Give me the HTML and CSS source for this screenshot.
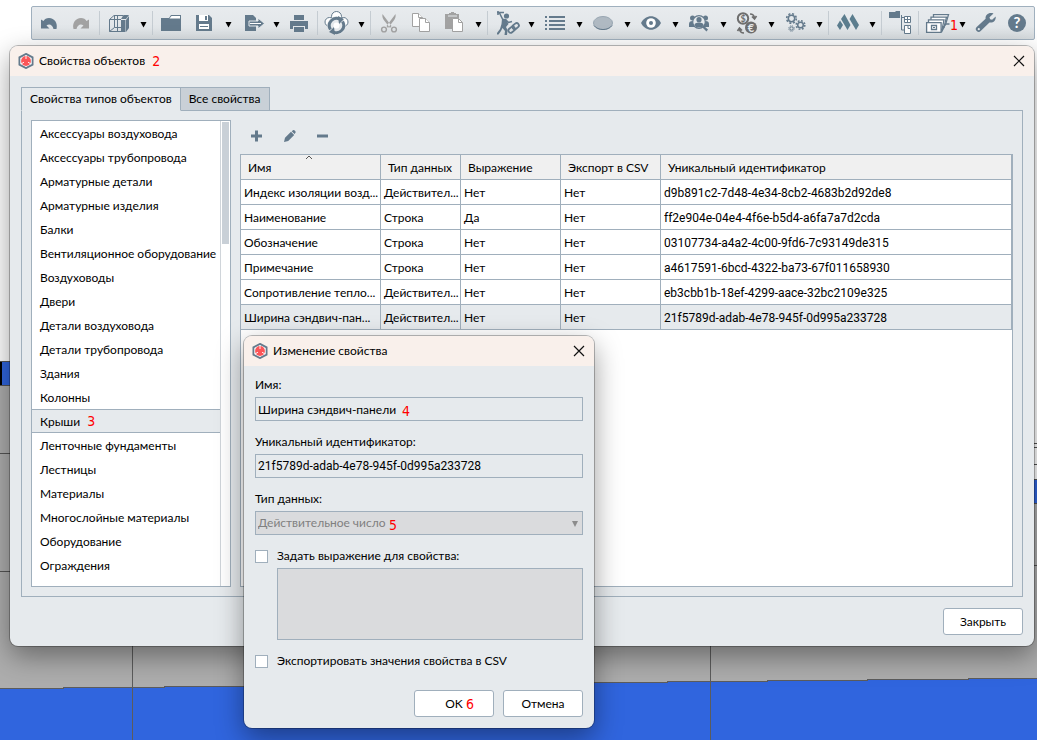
FILE: index.html
```html
<!DOCTYPE html>
<html lang="ru">
<head>
  <meta charset="UTF-8">
  <meta name="viewport" content="width=device-width, initial-scale=1.0">
  <title>Свойства объектов</title>
  <link rel="stylesheet" href="styles.css">
</head>
<body>
  <!-- Общие значки -->
  <svg class="sprite" aria-hidden="true">
    <symbol id="caret" viewBox="0 0 16 32"><path d="M6.500 15h6l-3 5.500z"/></symbol>
    <symbol id="close" viewBox="0 0 12 12"><path d="M1 1l10 10M11 1L1 11" fill="none" stroke="#111" stroke-width="1.200"/></symbol>
    <symbol id="logo" viewBox="0 0 16 16">
      <path d="M8 .9l6.600 3.500v7.200L8 15.100l-6.600-3.500V4.400z" fill="#fff" stroke="#647a8c" stroke-width="1.800"/>
      <circle cx="8" cy="8" r="4.900" fill="#fb5558"/>
      <path d="M8 3v3M6 9.200l-2.500 1.500M10 9.200l2.500 1.500" fill="none" stroke="#fff" stroke-width=".9"/>
    </symbol>
  </svg>

  <!-- 3D-вид -->
  <svg class="scene" viewBox="0 0 1037 740" preserveAspectRatio="none" shape-rendering="crispEdges" aria-hidden="true">
    <rect width="1037" height="740" fill="#fff"/>
    <rect y="361" width="500" height="379" fill="#adadad"/>
    <rect x="500" y="479" width="537" height="261" fill="#adadad"/>
    <rect y="361" width="20" height="24" fill="#3065de"/>
    <rect y="361" width="2" height="24" fill="#000"/>
    <rect x="1020" y="479" width="17" height="24" fill="#3065de"/>
    <path d="M0 361.500h20M0 385.500h20M0 453.500h20M0 571.500h20M1020 443.500h17M1020 447.500h17M1020 464.500h17M1020 479.500h17M1020 503.500h17M1020 565.500h17" stroke="#555"/>
    <path d="M0 688h63v-1h101v-1h100v-1h101v-1h101v-1h100v-1h101v-1h200v-1h100v-1h101v-1h69v62H0z" fill="#3065de"/>
    <path d="M0 688.500h63v-1h101v-1h100v-1h101v-1h101v-1h100v-1h101v-1h100v-1h100v-1h101v-1h69M132.500 600v140M710.500 600v140" fill="none" stroke="#5c5c5c"/>
  </svg>

  <!-- Панель инструментов -->
  <header class="toolbar">
    <button class="tool" aria-label="Отменить"><svg viewBox="0 0 32 32"><path d="M8 12.500v9h8.500l-3-3c3-2 6-.5 7 3.500h3c1.500-6-2-10.800-7.500-11-2.500 0-4.500 1-5.500 3z"/></svg></button>
    <button class="tool off" aria-label="Повторить"><svg viewBox="0 0 32 32"><path d="M24 12.500v9h-8.500l3-3c-3-2-6-.5-7 3.500h-3c-1.500-6 2-10.800 7.500-11 2.500 0 4.500 1 5.500 3z"/></svg></button>
    <span class="sep"></span>
    <button class="tool" aria-label="Вид"><svg viewBox="0 0 32 32"><path d="M19 13h4.500v12H19zM19 12l2.500-4H27l-3 4zM24 13l3-4v12l-3 4z"/><path d="M19 12.500H7.500v12H19M7.500 12.500l4.500-4h9M12.500 8.500v12H19M12.500 20.500l-5 4M15.500 8.500v16" fill="none" stroke="#647a8c"/></svg></button>
    <button class="drop" aria-label="Ещё виды"><svg><use href="#caret"/></svg></button>
    <span class="sep"></span>
    <button class="tool" aria-label="Открыть"><svg viewBox="0 0 32 32"><path d="M6 11h8l2-3h10v16H6z"/><path d="M14.500 11.500l2-2.500H25v2.500z" fill="#fff"/><path d="M6 12h20v1H6z"/></svg></button>
    <button class="tool" aria-label="Сохранить"><svg viewBox="0 0 32 32"><path d="M9 8h13l3 3v13H9z"/><path d="M12 8h9v6h-9zM12 17h10v5H12z" fill="#fff"/><path d="M18 9h2v4h-2zM13 19h8v1h-8z"/></svg></button>
    <button class="drop" aria-label="Варианты сохранения"><svg><use href="#caret"/></svg></button>
    <button class="tool" aria-label="Экспорт"><svg viewBox="0 0 32 32"><path d="M10 8h8l3 3v13H10z"/><path d="M14 14h9v-3l6.500 5.500L23 22v-3h-9z" stroke="#e6eaed"/><path d="M15 16.500h11" stroke="#fff"/></svg></button>
    <button class="drop" aria-label="Варианты экспорта"><svg><use href="#caret"/></svg></button>
    <button class="tool" aria-label="Печать"><svg viewBox="0 0 32 32"><path d="M11 8h10v5H11zM7 14h18v8h-3v-3H10v3H7zM11 20h10v5H11z"/></svg></button>
    <span class="sep"></span>
    <button class="tool" aria-label="Обновить"><svg viewBox="0 0 32 32"><g fill="#fff" stroke="#647a8c"><circle cx="9.500" cy="15" r="4.500"/><circle cx="23.500" cy="15" r="4.500"/><circle cx="16.500" cy="9.500" r="5"/></g><circle cx="16.500" cy="18.500" r="9.200" fill="#e6eaed"/><g fill="none" stroke="#647a8c" stroke-width="3"><path d="M10.500 22.500a7.200 7.200 0 0 1 9-10.500"/><path d="M22.500 14.500a7.200 7.200 0 0 1-9 10.500"/></g><path d="M18 9l6 3-5 5zM15 28l-6-3 5-5z"/><circle cx="16.500" cy="18.500" r="3" fill="#fff"/></svg></button>
    <button class="drop" aria-label="Варианты обновления"><svg><use href="#caret"/></svg></button>
    <span class="sep"></span>
    <button class="tool off" aria-label="Вырезать"><svg viewBox="0 0 32 32"><path d="M9.500 7c-.6 3 .5 5 1.700 6.500l5.800 7.500 1.500-2zM22.500 7c.6 3-.5 5-1.700 6.500L15 21l-1.500-2z"/><g fill="none" stroke="#a2a2a2" stroke-width="1.400"><circle cx="11" cy="22.500" r="2.400"/><circle cx="21" cy="22.500" r="2.400"/></g></svg></button>
    <button class="tool off" aria-label="Копировать"><svg viewBox="0 0 32 32"><g fill="#fff" stroke="#a2a2a2"><path d="M7.500 6.500h6l4 4v9h-10z"/><path d="M13.500 6.500v4h4M14.500 11.500h6l4 4v9h-10z"/><path d="M20.500 11.500v4h4"/></g></svg></button>
    <button class="tool off" aria-label="Вставить"><svg viewBox="0 0 32 32"><path d="M8 7h4V6h2V5h3v1h2v1h3v15H8z"/><path d="M11 9h9" stroke="#e6eaed"/><path d="M15.500 11.500h6l4 4v9h-10z" fill="#fff" stroke="#a2a2a2"/><path d="M21.500 11.500v4h4" fill="none" stroke="#a2a2a2"/></svg></button>
    <button class="drop" aria-label="Варианты вставки"><svg><use href="#caret"/></svg></button>
    <span class="sep"></span>
    <button class="tool" aria-label="Построение"><svg viewBox="0 0 32 32"><circle cx="16.500" cy="9" r="2.600"/><path d="M12 11.500l4 .5 2.500 5-2.500 3 1.500 3-.5 5h-2.500l.5-4-2.500-3-1.500 3-2.500 3.500H7v-1.500L10 22l1.500-5z"/><g fill="none" stroke="#647a8c"><path d="M8 4v4M7 5.500h7M9.500 6l3 6" stroke-width="1.600"/><path d="M15.500 12.500l3 3 3.500-1" stroke-width="1.500"/><rect x="18" y="20.500" width="7" height="4.500" rx="2.200" stroke-width="1.800" transform="rotate(-40 21.500 22.500)"/><rect x="22" y="17" width="7" height="4.500" rx="2.200" stroke-width="1.800" transform="rotate(-40 25.500 19)"/></g></svg></button>
    <button class="drop" aria-label="Варианты построения"><svg><use href="#caret"/></svg></button>
    <button class="tool" aria-label="Список"><svg viewBox="0 0 32 32"><path d="M7 9h2v2H7zM11 9h16v2H11zM7 13h2v2H7zM11 13h16v2H11zM7 17h2v2H7zM11 17h16v2H11zM7 21h2v2H7zM11 21h16v2H11z"/></svg></button>
    <button class="drop" aria-label="Варианты списка"><svg><use href="#caret"/></svg></button>
    <button class="tool" aria-label="Фильтр"><svg viewBox="0 0 32 32"><ellipse cx="17" cy="16" rx="9.500" ry="6.500" fill="#afb9c2" stroke="#98a6b2"/><path d="M8 18.500c3.500 5.400 14.500 5.400 18 0" fill="none" stroke="#647a8c"/></svg></button>
    <button class="drop" aria-label="Варианты фильтра"><svg><use href="#caret"/></svg></button>
    <button class="tool" aria-label="Видимость"><svg viewBox="0 0 32 32"><path d="M7 16c4.500-9 15.500-9 20 0-4.500 9-15.500 9-20 0z"/><circle cx="17" cy="16" r="4.800" fill="#fff"/><circle cx="17" cy="16" r="2"/></svg></button>
    <button class="drop" aria-label="Варианты видимости"><svg><use href="#caret"/></svg></button>
    <button class="tool" aria-label="Совместная работа"><svg viewBox="0 0 32 32"><circle cx="10.500" cy="11" r="2.500"/><circle cx="23.500" cy="11" r="2.500"/><path d="M7 20v-3q0-3 3.500-3h13q3.500 0 3.500 3v3z"/><circle cx="17" cy="15" r="6.300" fill="#e6eaed" stroke="#647a8c" stroke-width="1.200"/><circle cx="17" cy="12.700" r="2.600"/><path d="M12.500 18q0-2.500 4.500-2.500t4.500 2.500l-2 2.500h-5zM20 20l1.500-1.500 4.500 4-1.500 2z"/></svg></button>
    <button class="drop" aria-label="Варианты совместной работы"><svg><use href="#caret"/></svg></button>
    <button class="tool grey" aria-label="Стоимость"><svg viewBox="0 0 32 32"><circle cx="13" cy="11.500" r="5.200" fill="#e6eaed" stroke="#6e6e6e" stroke-width="2"/><circle cx="21" cy="20.500" r="6"/><text x="13" y="15" class="coin">$</text><text x="21" y="24.500" class="coin light">€</text><g fill="none" stroke="#6e6e6e" stroke-width="1.700"><path d="M20 7q4 0 4.500 4M22 9.500l2.500 2.500 2-3M14 26q-4 0-4.500-4M12 23.500L9.500 21l-2 3"/></g></svg></button>
    <button class="drop" aria-label="Варианты стоимости"><svg><use href="#caret"/></svg></button>
    <button class="tool" aria-label="Настройки стилей"><svg viewBox="0 0 32 32"><g fill="none" stroke="#647a8c"><circle cx="13.500" cy="11.500" r="3.200" stroke-width="1.500"/><circle cx="13.500" cy="11.500" r="4.800" stroke-width="1.600" stroke-dasharray="2 1.770"/><circle cx="22.500" cy="18" r="2.800" stroke-width="1.500"/><circle cx="22.500" cy="18" r="4.300" stroke-width="1.600" stroke-dasharray="1.800 1.577"/><circle cx="13.500" cy="21.500" r="1.600"/><circle cx="13.500" cy="21.500" r="2.700" stroke-dasharray="1.200 .92"/></g></svg></button>
    <button class="drop" aria-label="Варианты настроек стилей"><svg><use href="#caret"/></svg></button>
    <span class="sep"></span>
    <button class="tool teal" aria-label="Материалы"><svg viewBox="0 0 32 32"><path d="M6 18.500l3-5 3 4.500-3 5zM10 12l3.500-5 6 11-3 5zM18.500 12l3-5L28 18l-3 5z"/></svg></button>
    <button class="drop" aria-label="Варианты материалов"><svg><use href="#caret"/></svg></button>
    <span class="sep"></span>
    <button class="tool" aria-label="Структура"><svg viewBox="0 0 32 32"><path d="M5 5h6l1-1h4v7H5z"/><g fill="#fff" stroke="#647a8c"><path d="M17 10.500h3M17.500 8v15h3" fill="none"/><path d="M20.500 9.500h6v6h-6zM20.500 18.500h6v8h-6z"/><path d="M23.500 9.500v6M20.500 12.500h6M24 18.500v3h2.500"/></g></svg></button>
    <span class="sep"></span>
    <button class="tool" aria-label="Свойства объектов"><svg viewBox="0 0 32 32"><g fill="#fff" stroke="#647a8c" stroke-width="1.300"><path d="M12.500 14V7.700h15l-3 10z"/><path d="M10 14v-3.800h15.500l-2.500 10z"/><path d="M7.500 16v-3.200h15.500l-2 10z"/><path d="M5.600 15.600h14.500v9.800H5.600z"/><path d="M20.500 25l4-8h4" stroke-width="1.500" fill="none"/><path d="M10.500 18.500h5v4h-5z"/></g><path d="M12 20h2v1h-2z"/></svg></button>
    <button class="drop" aria-label="Ещё свойства"><svg><use href="#caret"/></svg><span class="mark">1</span></button>
    <button class="tool" aria-label="Настройки"><svg viewBox="0 0 32 32"><path d="M24.500 6.500l-4 3.800.6 2 2 .5 3.600-3.400c.4 4-2.300 6.600-6.200 6.100l-8.800 8.600a2.800 2.800 0 0 1-4-4l8.900-8.300c-.6-4 3.500-7 7.900-5.300z"/><circle cx="9.800" cy="22.200" r="1.100" fill="#e6eaed"/></svg></button>
    <button class="tool" aria-label="Справка"><svg viewBox="0 0 32 32"><circle cx="16" cy="16" r="9"/><text x="16" y="21" class="help">?</text></svg></button>
  </header>

  <!-- Окно свойств объектов -->
  <section class="window main-window">
    <div class="titlebar">
      <svg class="logo"><use href="#logo"/></svg>
      <h1>Свойства объектов</h1>
      <span class="num">2</span>
      <button class="close" aria-label="Закрыть окно"><svg><use href="#close"/></svg></button>
    </div>
    <div class="content">
      <div class="tabs" role="tablist">
        <button class="tab active" role="tab" aria-selected="true">Свойства типов объектов</button>
        <button class="tab" role="tab" aria-selected="false">Все свойства</button>
      </div>
      <div class="panel">
        <div class="types">
          <ul>
            <li>Аксессуары воздуховода</li>
            <li>Аксессуары трубопровода</li>
            <li>Арматурные детали</li>
            <li>Арматурные изделия</li>
            <li>Балки</li>
            <li>Вентиляционное оборудование</li>
            <li>Воздуховоды</li>
            <li>Двери</li>
            <li>Детали воздуховода</li>
            <li>Детали трубопровода</li>
            <li>Здания</li>
            <li>Колонны</li>
            <li class="selected">Крыши <span class="num">3</span></li>
            <li>Ленточные фундаменты</li>
            <li>Лестницы</li>
            <li>Материалы</li>
            <li>Многослойные материалы</li>
            <li>Оборудование</li>
            <li>Ограждения</li>
            <li>Окна</li>
          </ul>
          <div class="scrollbar"><div class="thumb"></div></div>
        </div>
        <div class="properties">
          <div class="actions">
            <button aria-label="Добавить"><svg viewBox="0 0 32 32"><path d="M11 14.500h4v-4h3v4h4v3h-4v4h-3v-4h-4z"/></svg></button>
            <button aria-label="Изменить"><svg viewBox="0 0 32 32"><path d="M11 22l1-4.200 6-6 3.200 3.200-6 6zM18.700 11.200l1.300-1q1-.5 2 .5t.5 2l-1 1.300z"/></svg></button>
            <button aria-label="Удалить"><svg viewBox="0 0 32 32"><path d="M11 14.500h11v3H11z"/></svg></button>
          </div>
          <div class="table-box">
            <table>
              <thead>
                <tr>
                  <th class="col-name">Имя<svg class="sort" viewBox="0 0 8 5"><path d="M1 4l3-3 3 3" fill="none" stroke="#555"/></svg></th>
                  <th class="col-type">Тип данных</th>
                  <th class="col-flag">Выражение</th>
                  <th class="col-flag">Экспорт в CSV</th>
                  <th>Уникальный идентификатор</th>
                </tr>
              </thead>
              <tbody>
                <tr><td>Индекс изоляции возд...</td><td>Действител...</td><td>Нет</td><td>Нет</td><td class="uid">d9b891c2-7d48-4e34-8cb2-4683b2d92de8</td></tr>
                <tr><td>Наименование</td><td>Строка</td><td>Да</td><td>Нет</td><td class="uid">ff2e904e-04e4-4f6e-b5d4-a6fa7a7d2cda</td></tr>
                <tr><td>Обозначение</td><td>Строка</td><td>Нет</td><td>Нет</td><td class="uid">03107734-a4a2-4c00-9fd6-7c93149de315</td></tr>
                <tr><td>Примечание</td><td>Строка</td><td>Нет</td><td>Нет</td><td class="uid">a4617591-6bcd-4322-ba73-67f011658930</td></tr>
                <tr><td>Сопротивление тепло...</td><td>Действител...</td><td>Нет</td><td>Нет</td><td class="uid">eb3cbb1b-18ef-4299-aace-32bc2109e325</td></tr>
                <tr class="selected"><td>Ширина сэндвич-пан...</td><td>Действител...</td><td>Нет</td><td>Нет</td><td class="uid">21f5789d-adab-4e78-945f-0d995a233728</td></tr>
              </tbody>
            </table>
          </div>
        </div>
      </div>
      <div class="buttons">
        <button class="button">Закрыть</button>
      </div>
    </div>
  </section>

  <!-- Окно изменения свойства -->
  <section class="window edit-window">
    <div class="titlebar">
      <svg class="logo"><use href="#logo"/></svg>
      <h2>Изменение свойства</h2>
      <button class="close" aria-label="Закрыть окно"><svg><use href="#close"/></svg></button>
    </div>
    <form class="form">
      <label for="name">Имя:</label>
      <div class="field">
        <input type="text" id="name" value="Ширина сэндвич-панели" readonly>
        <span class="mark mark-name">4</span>
      </div>
      <label for="uid">Уникальный идентификатор:</label>
      <div class="field">
        <input type="text" id="uid" class="uid" value="21f5789d-adab-4e78-945f-0d995a233728" readonly>
      </div>
      <label for="type">Тип данных:</label>
      <div class="field">
        <select id="type" disabled><option>Действительное число</option></select>
        <svg class="arrow" viewBox="0 0 6 6"><path d="M0 0h6L3 6z"/></svg>
        <span class="mark mark-type">5</span>
      </div>
      <label class="check"><input type="checkbox" id="useExpr">Задать выражение для свойства:</label>
      <textarea aria-label="Выражение" disabled></textarea>
      <label class="check"><input type="checkbox" id="csv">Экспортировать значения свойства в CSV</label>
      <div class="buttons">
        <button type="button" class="button">OK<span class="mark mark-ok">6</span></button>
        <button type="button" class="button">Отмена</button>
      </div>
    </form>
  </section>
</body>
</html>
```
FILE: styles.css
```css
* {
  margin: 0;
  padding: 0;
  box-sizing: border-box;
}
html, body {
  height: 100%;
}
body {
  position: relative;
  overflow: hidden;
  font-family: Lato, Roboto, sans-serif;
  font-size: 12px;
  line-height: 18px;
  color: #000;
}
button, input, select, textarea {
  font: inherit;
  color: inherit;
}
button {
  background: none;
  border: none;
}
.uid {
  font-family: Roboto, sans-serif;
}
.sprite {
  position: absolute;
  width: 0;
  height: 0;
}
.scene {
  position: absolute;
  inset: 0;
  width: 100%;
  height: 100%;
}

/* Панель инструментов */
.toolbar {
  position: relative;
  display: flex;
  height: 34px;
  margin: 6px 2px 0 31px;
  padding: 0 1px;
  border: 1px solid #a0b0be;
  border-radius: 2px;
  background: linear-gradient(#e8ebee, #e3e7ea 60%, #d5dadd);
}
.tool, .drop {
  position: relative;
  flex: none;
  width: 32px;
  height: 32px;
}
.drop {
  width: 16px;
}
.tool svg, .drop svg {
  display: block;
  width: 100%;
  height: 32px;
}
.tool svg {
  fill: #647a8c;
}
.tool.off svg {
  fill: #a2a2a2;
}
.tool.grey svg {
  fill: #6e6e6e;
}
.tool.teal svg {
  fill: #5b7d8e;
}
.sep {
  flex: none;
  width: 1px;
  height: 24px;
  margin: 4px 2px;
  background: #c5ccd2;
}
.coin {
  font-size: 9px;
  font-weight: bold;
  text-anchor: middle;
}
.coin.light {
  font-size: 11px;
  fill: #e6eaed;
}
.help {
  font-size: 15px;
  font-weight: bold;
  text-anchor: middle;
  fill: #fff;
}

/* Красные номера */
.num, .mark {
  color: #f00;
  font-family: "DejaVu Sans Condensed", "DejaVu Sans", sans-serif;
  font-size: 14px;
}
.mark {
  position: absolute;
}
.drop .mark {
  top: 9px;
  left: -3px;
}
.mark-name {
  top: 5px;
  left: 147px;
}
.mark-type {
  top: 5px;
  left: 134px;
}
.mark-ok {
  top: 4px;
  left: 51px;
}

/* Окна */
.window {
  position: absolute;
  display: flex;
  flex-direction: column;
  background: #e6eaed;
  border-radius: 8px;
  box-shadow: 0 0 0 1px rgba(0, 0, 0, 0.26), 0 10px 28px rgba(0, 0, 0, 0.4);
}
.main-window {
  top: 46px;
  right: 3px;
  bottom: 94px;
  left: 10px;
}
.edit-window {
  top: 336px;
  left: 244px;
  width: 350px;
}
.titlebar {
  display: flex;
  align-items: center;
  height: 30px;
  padding: 0 9px 0 8px;
  background: #f9f0eb;
  border-radius: 8px 8px 0 0;
}
.titlebar h1, .titlebar h2 {
  margin-left: 5px;
  font-size: 12px;
  font-weight: normal;
}
.titlebar .num {
  margin-left: 7px;
}
.logo {
  width: 16px;
  height: 16px;
}
.close {
  width: 12px;
  height: 12px;
  margin-left: auto;
}
.close svg {
  display: block;
  width: 12px;
  height: 12px;
}
.content {
  flex: 1;
  display: flex;
  flex-direction: column;
  min-height: 0;
  padding: 11px;
}

/* Вкладки */
.tabs {
  display: flex;
  margin-bottom: -1px;
}
.tab {
  height: 24px;
  padding: 0 8px;
  border: 1px solid #a0afbc;
  border-left: none;
  background: #c9d0d7;
}
.tab.active {
  position: relative;
  border-left: 1px solid #a0afbc;
  border-bottom-color: #e6eaed;
  background: #e6eaed;
}
.panel {
  flex: 1;
  display: flex;
  gap: 9px;
  min-height: 0;
  padding: 9px;
  border: 1px solid #a0afbc;
}

/* Список типов */
.types {
  display: flex;
  flex: none;
  width: 200px;
  border: 1px solid #a0afbc;
  background: #fff;
}
.types ul {
  flex: 1;
  min-width: 0;
  overflow: hidden;
  list-style: none;
  white-space: nowrap;
}
.types li {
  height: 24px;
  padding: 1px 8px 0;
  border: solid transparent;
  border-width: 1px 0;
  line-height: 22px;
}
.types li.selected {
  border-color: #a0afbc;
  background: #e6eaed;
  line-height: 20px;
}
.types .num {
  margin-left: 4px;
}
.scrollbar {
  width: 10px;
  padding: 1px;
  border-left: 1px solid #d0d5da;
}
.thumb {
  height: 122px;
  background: #c9d0d7;
}

/* Таблица свойств */
.properties {
  flex: 1;
  display: flex;
  flex-direction: column;
  min-width: 0;
}
.actions {
  display: flex;
  gap: 1px;
  height: 34px;
}
.actions button {
  width: 32px;
  height: 32px;
}
.actions svg {
  display: block;
  fill: #647a8c;
}
.table-box {
  flex: 1;
  min-height: 0;
  border: 1px solid #a0afbc;
  background: #fff;
}
table {
  width: 100%;
  table-layout: fixed;
  border-spacing: 0;
}
th, td {
  height: 25px;
  border: solid #a0afbc;
  border-width: 0 1px 1px 0;
  overflow: hidden;
  text-align: left;
  white-space: nowrap;
}
th {
  position: relative;
  padding: 2px 7px 0;
  background: #f0f0f0;
  font-weight: normal;
}
td {
  padding: 2px 3px 0;
}
tr.selected td {
  background: #e6eaed;
}
.col-name {
  width: 140px;
}
.col-type {
  width: 80px;
}
.col-flag {
  width: 100px;
}
.sort {
  position: absolute;
  top: 0;
  left: 64px;
  width: 8px;
  height: 5px;
}

/* Кнопки */
.buttons {
  display: flex;
  justify-content: flex-end;
  gap: 9px;
  margin-top: 11px;
}
.button {
  position: relative;
  width: 80px;
  height: 27px;
  border: 1px solid #a0afbc;
  border-radius: 3px;
  background: #fff;
}

/* Форма */
.form {
  display: flex;
  flex-direction: column;
  padding: 10px 11px 11px;
}
.form label {
  margin-bottom: 3px;
}
.field {
  position: relative;
  margin-bottom: 12px;
}
.field input, .field select {
  display: block;
  width: 100%;
  height: 24px;
  padding: 0 2px;
  border: 1px solid #a0afbc;
  border-radius: 0;
  background: #e6eaed;
  outline: none;
}
.field select {
  appearance: none;
  background: #dadbdd;
  color: #808080;
  opacity: 1;
}
.arrow {
  position: absolute;
  top: 10px;
  right: 5px;
  width: 6px;
  height: 6px;
  fill: #8c8c8c;
}
.check {
  display: flex;
  align-items: center;
  gap: 9px;
}
.check input {
  appearance: none;
  width: 13px;
  height: 13px;
  border: 1px solid #a0afbc;
  background: #fff;
}
textarea {
  height: 72px;
  margin: 0 0 12px 22px;
  border: 1px solid #a0afbc;
  background: #dadbdd;
  resize: none;
}
.form .buttons {
  margin-top: 17px;
}
```
